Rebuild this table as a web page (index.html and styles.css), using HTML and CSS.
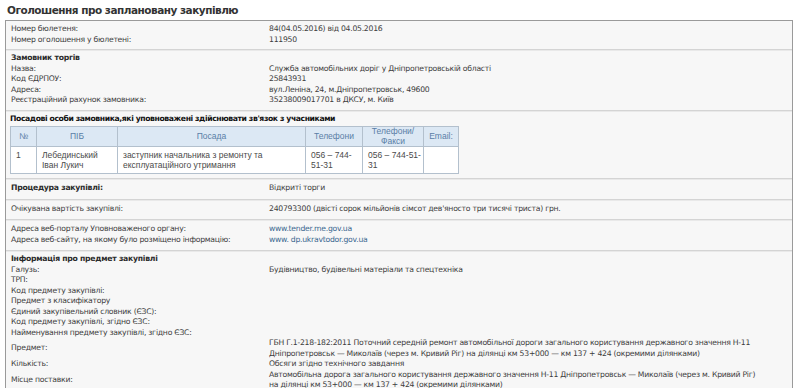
FILE: index.html
```html
<!DOCTYPE html>
<html lang="uk">
<head>
<meta charset="utf-8">
<title>Оголошення про заплановану закупівлю</title>
<link rel="stylesheet" href="styles.css">
</head>
<body>
<h1 class="page-title">Оголошення про заплановану закупівлю</h1>
<div class="card">
  <div class="block">
    <div class="label">Номер бюлетеня:</div><div class="value">84(04.05.2016) від 04.05.2016</div>
    <div class="label">Номер оголошення у бюлетені:</div><div class="value">111950</div>
  </div>
  <div class="block">
    <div class="heading">Замовник торгів</div>
    <div class="label">Назва:</div><div class="value">Служба автомобільних доріг у Дніпропетровській області</div>
    <div class="label">Код ЄДРПОУ:</div><div class="value">25843931</div>
    <div class="label">Адреса:</div><div class="value">вул.Леніна, 24, м.Дніпропетровськ, 49600</div>
    <div class="label">Реєстраційний рахунок замовника:</div><div class="value">35238009017701 в ДКСУ, м. Київ</div>
  </div>
  <div class="block">
    <div class="heading heading-dark">Посадові особи замовника,які уповноважені здійснювати зв'язок з учасниками</div>
    <table class="contacts">
      <colgroup>
        <col class="c-num"><col class="c-name"><col class="c-pos"><col class="c-tel"><col class="c-fax"><col class="c-mail">
      </colgroup>
      <thead>
        <tr><th>№</th><th>ПІБ</th><th>Посада</th><th>Телефони</th><th>Телефони/<br>Факси</th><th>Email:</th></tr>
      </thead>
      <tbody>
        <tr><td>1</td><td>Лебединський<br>Іван Лукич</td><td>заступник начальника з ремонту та<br>експлуатаційного утримання</td><td>056 – 744-<br>51-31</td><td>056 – 744-51-<br>31</td><td></td></tr>
      </tbody>
    </table>
  </div>
  <div class="block block-roomy">
    <div class="label strong">Процедура закупівлі:</div><div class="value">Відкриті торги</div>
  </div>
  <div class="block block-roomy">
    <div class="label">Очікувана вартість закупівлі:</div><div class="value">240793300 (двісті сорок мільйонів сімсот дев'яносто три тисячі триста) грн.</div>
  </div>
  <div class="block block-roomy">
    <div class="label">Адреса веб-порталу Уповноваженого органу:</div><div class="value"><a class="link" href="#">www.tender.me.gov.ua</a></div>
    <div class="label">Адреса веб-сайту, на якому було розміщено інформацію:</div><div class="value"><a class="link" href="#">www. dp.ukravtodor.gov.ua</a></div>
  </div>
  <div class="block block-last">
    <div class="heading">Інформація про предмет закупівлі</div>
    <div class="label">Галузь:</div><div class="value">Будівництво, будівельні матеріали та спецтехніка</div>
    <div class="label">ТРП:</div><div class="value"></div>
    <div class="label">Код предмету закупівлі:</div><div class="value"></div>
    <div class="label">Предмет з класифікатору</div><div class="value"></div>
    <div class="label">Єдиний закупівельний словник (ЄЗС):</div><div class="value"></div>
    <div class="label">Код предмету закупівлі, згідно ЄЗС:</div><div class="value"></div>
    <div class="label">Найменування предмету закупівлі, згідно ЄЗС:</div><div class="value"></div>
    <div class="label">Предмет:</div><div class="value">ГБН Г.1-218-182:2011 Поточний середній ремонт автомобільної дороги загального користування державного значення Н-11<br>Дніпропетровськ — Миколаїв (через м. Кривий Ріг) на ділянці км 53+000 — км 137 + 424 (окремими ділянками)</div>
    <div class="label">Кількість:</div><div class="value">Обсяги згідно технічного завдання</div>
    <div class="label">Місце поставки:</div><div class="value">Автомобільна дорога загального користування державного значення Н-11 Дніпропетровськ — Миколаїв (через м. Кривий Ріг)<br>на ділянці км 53+000 — км 137 + 424 (окремими ділянками)</div>
  </div>
</div>
</body>
</html>
```

FILE: styles.css
```css
html, body {
  margin: 0;
  background: #ffffff;
}
body {
  font-family: "DejaVu Sans", Verdana, sans-serif;
  font-size: 7.7px;
  line-height: 10.5px;
  letter-spacing: -0.25px;
  color: #3d3d3d;
  overflow: hidden;
}
.page-title {
  margin: 0;
  padding: 4px 7px 0;
  font-size: 10.5px;
  line-height: 13px;
  font-weight: bold;
  letter-spacing: -0.5px;
  color: #333333;
}
.card {
  margin: 3px 0 0 5px;
  width: 786px;
  border: 1px solid #9a9a9a;
  background: #f7f7f7;
}
.block {
  display: grid;
  grid-template-columns: 258px 1fr;
  align-items: center;
  padding: 3px 5px 4px;
  border-bottom: 1px solid #d4d4d4;
  box-shadow: 0 1px 0 #e9e9e9;
}
.block-roomy {
  padding: 4px 5px 5px;
}
.block-last {
  border-bottom: 0;
  box-shadow: none;
}
.heading {
  grid-column: 1 / -1;
  font-weight: bold;
  color: #2a2a2a;
}
.heading-dark {
  color: #111111;
  margin-left: -1px;
  letter-spacing: -0.4px;
}
.strong {
  font-weight: bold;
  color: #2a2a2a;
}
.value {
  white-space: nowrap;
}
.link {
  color: #3b6890;
  text-decoration: none;
}
.contacts {
  grid-column: 1 / -1;
  margin: 2px 0 0 -1px;
  width: 448px;
  table-layout: fixed;
  border-collapse: collapse;
  font-family: "Liberation Sans", Arial, sans-serif;
  font-size: 8.5px;
  line-height: 9.5px;
  letter-spacing: 0;
}
.c-num { width: 26px; }
.c-name { width: 81px; }
.c-pos { width: 188px; }
.c-tel { width: 57px; }
.c-fax { width: 61px; }
.c-mail { width: 35px; }
.contacts th {
  background: #dce8f4;
  color: #5a7ea6;
  font-weight: normal;
  border: 1px solid #b3c0cd;
  padding: 0 2px;
  height: 19px;
  text-align: center;
  vertical-align: middle;
}
.contacts td {
  background: #ffffff;
  color: #4a4a4a;
  border: 1px solid #b3c0cd;
  padding: 4px 2px 3px 5px;
  vertical-align: top;
  text-align: left;
  white-space: nowrap;
}
```
